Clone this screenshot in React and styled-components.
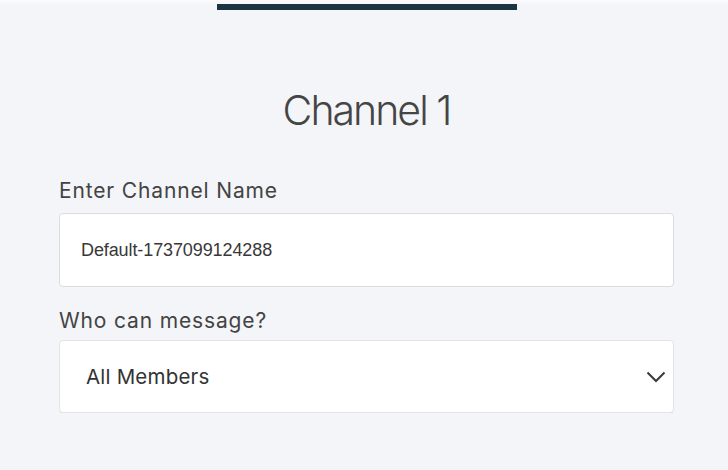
import React from 'react';
import styled, { createGlobalStyle } from 'styled-components';

const GlobalStyle = createGlobalStyle`
  html {
    background: linear-gradient(#fbfbfc, #f4f5f9) top / 100% 5px no-repeat, #f4f5f9;
  }
  body {
    margin: 0;
    font-family: Inter, 'Open Sans', Arial, sans-serif;
  }
`;

const StyledPage = styled.div`
  width: 615px;
  margin-left: 59px;
  padding-top: 4px;
  display: flex;
  flex-direction: column;
`;

const StyledProgress = styled.div`
  align-self: center;
  width: 300px;
  height: 6px;
  background-color: #1b3442;
`;

const StyledTitle = styled.h2`
  margin: 76px 0 0 0;
  text-align: center;
  font-size: 41px;
  line-height: 48px;
  font-weight: 350;
  color: #454545;
  letter-spacing: -2px;
`;

const StyledLabel = styled.label`
  display: block;
  margin-top: ${(props) => props.gap}px;
  font-size: 21px;
  line-height: 24px;
  letter-spacing: 0.85px;
  color: #434343;
`;

const StyledInput = styled.input`
  box-sizing: border-box;
  width: 100%;
  height: 74px;
  margin-top: 10px;
  padding: 0 21px;
  border: 1px solid #dcdcdf;
  border-radius: 4px;
  background: #fff;
  font-family: 'Liberation Sans', Arial, sans-serif;
  font-size: 18px;
  letter-spacing: -0.1px;
  color: #383838;
  outline: none;
`;

const StyledSelect = styled.div`
  box-sizing: border-box;
  width: 100%;
  height: 73px;
  margin-top: 7px;
  padding: 0 7px 0 26px;
  border: 1px solid #e3e3e6;
  border-radius: 4px;
  background: #fff;
  box-shadow: 0 2px 1px -1px #d9d9dc;
  display: flex;
  align-items: center;
  justify-content: space-between;
  font-size: 20.5px;
  letter-spacing: 0.2px;
  color: #333;
`;

const Chevron = () => (
  <svg width="20" height="12" viewBox="0 0 20 12">
    <path d="M1.5 1.5 L10 10 L18.5 1.5" fill="none" stroke="#3a3a3a" strokeWidth="2" />
  </svg>
);

const App = () => (
  <>
    <GlobalStyle />
    <StyledPage>
      <StyledProgress />
      <StyledTitle>Channel 1</StyledTitle>
      <StyledLabel gap={45}>Enter Channel Name</StyledLabel>
      <StyledInput type="text" defaultValue="Default-1737099124288" />
      <StyledLabel gap={22}>Who can message?</StyledLabel>
      <StyledSelect>
        <span>All Members</span>
        <Chevron />
      </StyledSelect>
    </StyledPage>
  </>
);

export default App;
